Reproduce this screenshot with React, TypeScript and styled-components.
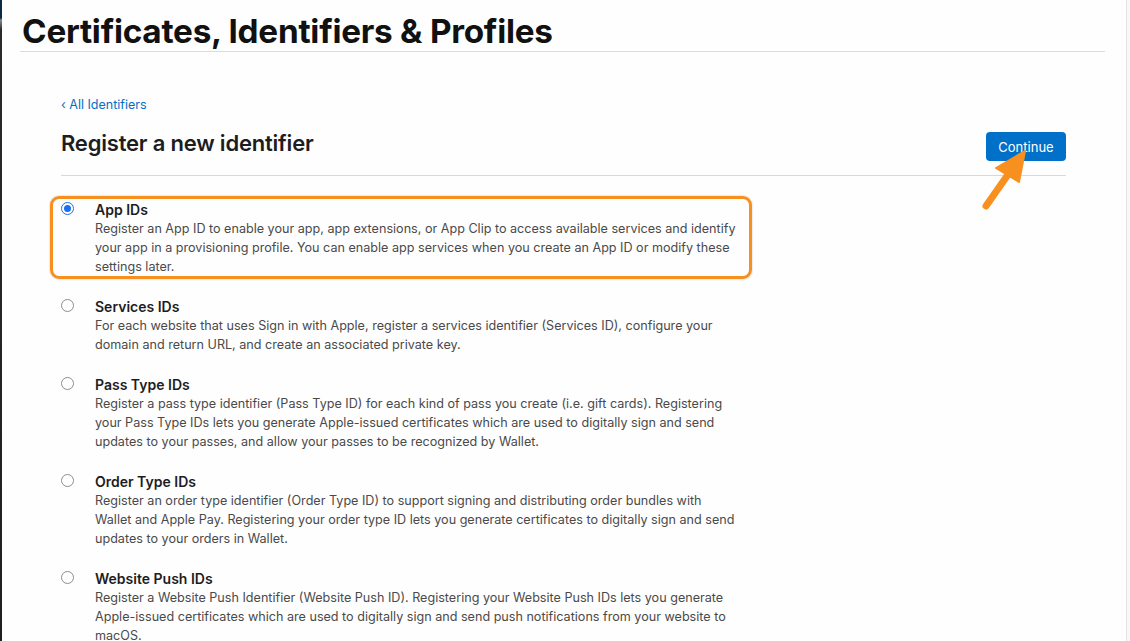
import styled, { createGlobalStyle } from 'styled-components'

const GlobalStyle = createGlobalStyle`
  html, body {
    margin: 0;
    padding: 0;
    background: #fefefe;
  }
  body {
    font-family: "Inter", "Liberation Sans", sans-serif;
    color: #1d1d1f;
  }
`;

const Page = styled.div`
  position: relative;
  display: flex;
  width: 1130px;
  height: 641px;
  overflow: hidden;
`;

const LeftBar = styled.div`
  width: 2px;
  flex: none;
  background: linear-gradient(to bottom, #0b2b45 0px, #0b2b45 18px, #8a8a8a 20px, #2a2a2a 30px, #1f1f1f 100%);
`;

const RightEdge = styled.div`
  width: 3px;
  flex: none;
  border-left: 1px solid #e2e2e2;
  background: #f8f8f8;
`;

const Main = styled.div`
  flex: 1;
  padding-left: 18px;
`;

const Header = styled.header`
  width: 1085px;
  border-bottom: 1px solid #dcdcdc;
`;

const PageTitle = styled.h1`
  margin: 0;
  padding: 11px 0 0 2px;
  font-size: 33.3px;
  line-height: 40px;
  font-weight: 700;
  letter-spacing: -0.25px;
  color: #111;
`;

const Content = styled.div`
  width: 1005px;
  padding-left: 41px;
`;

const BackLink = styled.a`
  display: block;
  margin-top: 45px;
  font-size: 12.5px;
  line-height: 16px;
  color: #0070c9;
  text-decoration: none;
`;

const TitleRow = styled.div`
  display: flex;
  justify-content: space-between;
  align-items: flex-start;
  margin-top: 15px;
  padding-bottom: 14px;
  border-bottom: 1px solid #d8d8d8;
`;

const SectionTitle = styled.h2`
  margin: 0;
  font-size: 22px;
  line-height: 30px;
  font-weight: 600;
  letter-spacing: -0.2px;
  color: #1d1d1f;
`;

const ContinueButton = styled.button`
  margin-top: 4px;
  width: 80px;
  height: 29px;
  border: none;
  border-radius: 4px;
  background: #0070c9;
  color: #fff;
  font-family: inherit;
  font-size: 13px;
  padding: 0;
`;

const List = styled.div`
  margin-top: 24px;
  display: flex;
  flex-direction: column;
  gap: 21px;
`;

const Item = styled.label<{ $highlight?: boolean }>`
  position: relative;
  display: grid;
  grid-template-columns: 34px 1fr;
  width: 690px;

  &::before {
    content: '';
    display: ${p => (p.$highlight ? 'block' : 'none')};
    position: absolute;
    left: -11px;
    top: -4px;
    right: -1px;
    bottom: -3px;
    border: 3px solid #f7901e;
    border-radius: 9px;
    box-shadow: 0 0 2px rgba(0, 0, 0, 0.25);
    pointer-events: none;
  }
`;

const Radio = styled.span<{ $checked?: boolean }>`
  margin-top: 2px;
  width: 13px;
  height: 13px;
  box-sizing: border-box;
  border-radius: 50%;
  border: ${p => (p.$checked ? '1.5px solid #1a6ff2' : '1px solid #8d8d8d')};
  background: #fff;
  display: flex;
  align-items: center;
  justify-content: center;

  &::after {
    content: '';
    display: ${p => (p.$checked ? 'block' : 'none')};
    width: 7px;
    height: 7px;
    border-radius: 50%;
    background: #1a6ff2;
  }
`;

const ItemTitle = styled.div`
  font-size: 14px;
  line-height: 19px;
  font-weight: 600;
  color: #1d1d1f;
`;

const ItemText = styled.div`
  font-size: 12.6px;
  line-height: 19px;
  color: #4a4a4a;
`;

const Arrow = styled.svg`
  position: absolute;
  left: 975px;
  top: 145px;
  pointer-events: none;
`;

const options = [
  {
    title: 'App IDs',
    lines: [
      'Register an App ID to enable your app, app extensions, or App Clip to access available services and identify',
      'your app in a provisioning profile. You can enable app services when you create an App ID or modify these',
      'settings later.',
    ],
    checked: true,
  },
  {
    title: 'Services IDs',
    lines: [
      'For each website that uses Sign in with Apple, register a services identifier (Services ID), configure your',
      'domain and return URL, and create an associated private key.',
    ],
  },
  {
    title: 'Pass Type IDs',
    lines: [
      'Register a pass type identifier (Pass Type ID) for each kind of pass you create (i.e. gift cards). Registering',
      'your Pass Type IDs lets you generate Apple-issued certificates which are used to digitally sign and send',
      'updates to your passes, and allow your passes to be recognized by Wallet.',
    ],
  },
  {
    title: 'Order Type IDs',
    lines: [
      'Register an order type identifier (Order Type ID) to support signing and distributing order bundles with',
      'Wallet and Apple Pay. Registering your order type ID lets you generate certificates to digitally sign and send',
      'updates to your orders in Wallet.',
    ],
  },
  {
    title: 'Website Push IDs',
    lines: [
      'Register a Website Push Identifier (Website Push ID). Registering your Website Push IDs lets you generate',
      'Apple-issued certificates which are used to digitally sign and send push notifications from your website to',
      'macOS.',
    ],
  },
];

const App = () => {
  return (
    <>
      <GlobalStyle />
      <Page>
        <LeftBar />
        <Main>
          <Header>
            <PageTitle>Certificates, Identifiers &amp; Profiles</PageTitle>
          </Header>
          <Content>
            <BackLink href="#">‹ All Identifiers</BackLink>
            <TitleRow>
              <SectionTitle>Register a new identifier</SectionTitle>
              <ContinueButton>Continue</ContinueButton>
            </TitleRow>
            <List>
              {options.map(o => (
                <Item key={o.title} $highlight={o.checked}>
                  <Radio $checked={o.checked} />
                  <div>
                    <ItemTitle>{o.title}</ItemTitle>
                    <ItemText>
                      {o.lines.map((l, i) => (
                        <span key={i}>
                          {l}
                          {i < o.lines.length - 1 && <br />}
                        </span>
                      ))}
                    </ItemText>
                  </div>
                </Item>
              ))}
            </List>
          </Content>
        </Main>
        <RightEdge />
        <Arrow width="60" height="70" viewBox="975 145 60 70">
          <line x1="986" y1="206" x2="1007" y2="176" stroke="#f7901e" strokeWidth="7" strokeLinecap="round" />
          <polygon points="1025,151 996,168 1019,182" fill="#f7901e" stroke="#f7901e" strokeWidth="2" strokeLinejoin="round" />
        </Arrow>
      </Page>
    </>
  )
}

export default App;
